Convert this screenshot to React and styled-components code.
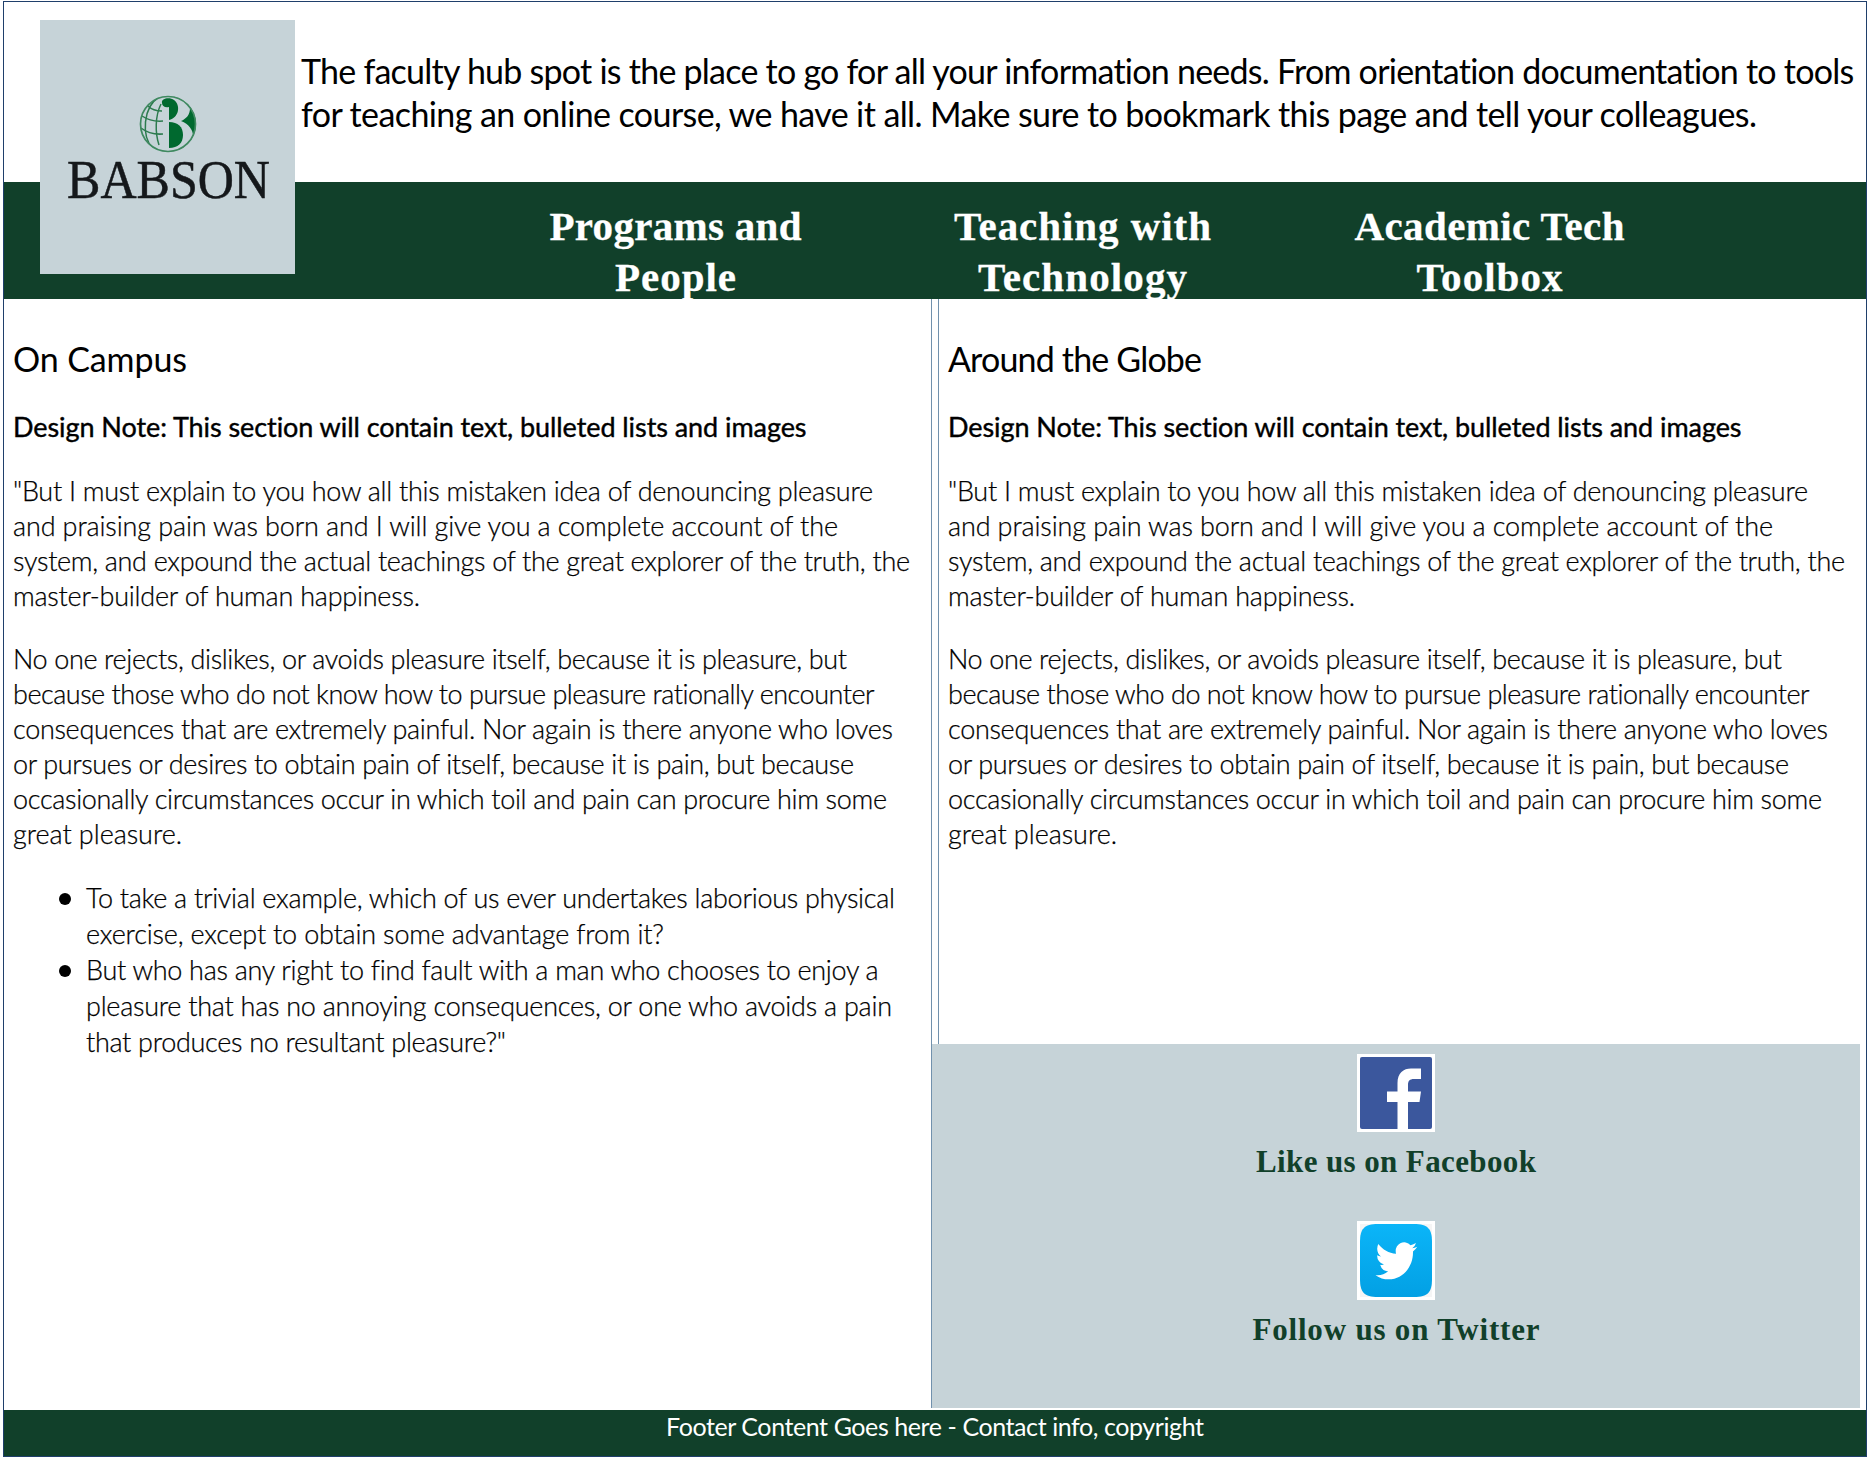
import React, { useLayoutEffect, useRef, useState } from "react";
import styled, { createGlobalStyle } from "styled-components";

const GlobalStyle = createGlobalStyle`
  * { box-sizing: border-box; }
  body { margin: 0; background: #fff; overflow: hidden; }
  h2, h3, p, ul { margin: 0; padding: 0; font-weight: inherit; }
`;

const green = "#11402a";
const mist = "#c6d3d8";
const sans = `Lato, "Open Sans", sans-serif`;
const serif = `"Liberation Serif", serif`;

const Frame = styled.div`
  display: flex;
  flex-direction: column;
  width: 1864px;
  height: 1456px;
  margin: 1px 0 0 3px;
  border: 1px solid #1f3f6b;
  color: #000;
  font-family: ${sans};
`;

const Header = styled.header`
  position: relative;
  height: 180px;
  padding: 47px 0 0 297px;
  font-size: 34px;
  line-height: 43px;
`;

const LogoBox = styled.div`
  position: absolute;
  left: 36px;
  top: 18px;
  width: 255px;
  height: 254px;
  background: ${mist};
`;

const Nav = styled.nav`
  display: flex;
  height: 117px;
  padding: 19px 0 0 468px;
  background: ${green};
`;

const NavLink = styled.a`
  width: 407px;
  display: flex;
  flex-direction: column;
  align-items: center;
  color: #fff;
  font: bold 41px/51px ${serif};
  -webkit-text-stroke: 0.3px #fff;
`;

const Columns = styled.main`
  display: flex;
  height: 1109px;
  margin-bottom: 2px;
`;

const Left = styled.section`
  width: 928px;
  padding: 38px 0 0 9px;
  border-right: 1px solid #7191ad;
`;

const Right = styled.div`
  width: 928px;
  display: flex;
  flex-direction: column;
`;

const Globe = styled.section`
  height: 745px;
  margin-left: 6px;
  padding: 38px 0 0 9px;
  border-left: 1px solid #7191ad;
`;

const Title = styled.h2`
  font-size: 34px;
  line-height: 43px;
`;

const Note = styled.h3`
  margin-top: 29px;
  font-size: 27px;
  line-height: 35px;
  -webkit-text-stroke: 0.4px #000;
`;

const Paragraph = styled.p`
  margin-top: ${(p) => p.$gap}px;
  font-size: 27px;
  font-weight: 300;
  line-height: 35px;
  -webkit-text-stroke: 0.25px #000;
`;

const List = styled.ul`
  margin-top: 29px;
  padding-left: 46px;
  list-style: none;
  font-size: 27px;
  font-weight: 300;
  line-height: 36px;
  -webkit-text-stroke: 0.25px #000;
`;

const Item = styled.li`
  display: flex;
  gap: 15px;
  &::before {
    content: "";
    flex: none;
    width: 12px;
    height: 12px;
    margin-top: 13px;
    border-radius: 50%;
    background: #000;
  }
`;

const Social = styled.aside`
  flex: 1;
  display: flex;
  flex-direction: column;
  align-items: center;
  padding-top: 10px;
  background: ${mist};
`;

const SocialLink = styled.a`
  display: flex;
  flex-direction: column;
  align-items: center;
  gap: 12px;
  margin-bottom: 41px;
  color: ${green};
  font: bold 31px/36px ${serif};
  svg { display: block; }
`;

const Footer = styled.footer`
  flex: 1;
  display: flex;
  justify-content: center;
  padding-top: 1px;
  background: ${green};
  color: #fff;
  font-size: 25px;
  line-height: 30px;
`;

const LineBox = styled.span`
  display: block;
  width: ${(p) => p.$width}px;
  white-space: nowrap;
`;

/* One line of copy, tracked so that it fills its measure. */
function Line({ width, children }) {
  const ref = useRef(null);
  const [tracking, setTracking] = useState(0);
  useLayoutEffect(() => {
    const natural = ref.current.getBoundingClientRect().width;
    setTracking((width - natural) / (children.length - 1));
  }, [width, children]);
  return (
    <LineBox $width={width}>
      <span ref={ref} style={{ letterSpacing: `${tracking}px` }}>{children}</span>
    </LineBox>
  );
}

const lines = (rows) => rows.map(([text, width]) => <Line key={text} width={width}>{text}</Line>);

const intro = [
  ["The faculty hub spot is the place to go for all your information needs. From orientation documentation to tools", 1555],
  ["for teaching an online course, we have it all. Make sure to bookmark this page and tell your colleagues.", 1456],
];

const first = [
  ["\"But I must explain to you how all this mistaken idea of denouncing pleasure", 860],
  ["and praising pain was born and I will give you a complete account of the", 825],
  ["system, and expound the actual teachings of the great explorer of the truth, the", 897],
  ["master-builder of human happiness.", 407],
];

const second = [
  ["No one rejects, dislikes, or avoids pleasure itself, because it is pleasure, but", 834],
  ["because those who do not know how to pursue pleasure rationally encounter", 862],
  ["consequences that are extremely painful. Nor again is there anyone who loves", 880],
  ["or pursues or desires to obtain pain of itself, because it is pain, but because", 841],
  ["occasionally circumstances occur in which toil and pain can procure him some", 874],
  ["great pleasure.", 169],
];

const items = [
  [
    ["To take a trivial example, which of us ever undertakes laborious physical", 809],
    ["exercise, except to obtain some advantage from it?", 578],
  ],
  [
    ["But who has any right to find fault with a man who chooses to enjoy a", 792],
    ["pleasure that has no annoying consequences, or one who avoids a pain", 806],
    ["that produces no resultant pleasure?\"", 420],
  ],
];

const links = [
  [["Programs and", 252], ["People", 121]],
  [["Teaching with", 257], ["Technology", 209]],
  [["Academic Tech", 270], ["Toolbox", 146]],
];

function Article({ title, width }) {
  return (
    <>
      <Title><Line width={width}>{title}</Line></Title>
      <Note><Line width={794}>Design Note: This section will contain text, bulleted lists and images</Line></Note>
      <Paragraph $gap={29}>{lines(first)}</Paragraph>
      <Paragraph $gap={28}>{lines(second)}</Paragraph>
    </>
  );
}

function Logo() {
  return (
    <svg width="255" height="254" viewBox="0 0 255 254">
      <defs>
        <clipPath id="globe"><circle cx="128" cy="104" r="28" /></clipPath>
      </defs>
      <g clipPath="url(#globe)">
        <path d="M134 75H158V133H134Z" fill="#00692f" />
        <path d="M127 74C143 73 150 80 150 88C150 95 146 99 141 101C149 104 153 110 153 116C153 126 144 131 127 133Z" fill={mist} />
        <path d="M129 102C138 102 143 107 143 115C143 123 138 128 129 128Z" fill="#00692f" />
        <path d="M122 83C121 78 130 77 134 80C141 85 139 98 129 100V87C125 88 122 86 122 83Z" fill="#00692f" />
        <g fill="none" stroke="#2c7b4e" strokeWidth="1.5">
          <path d="M119 77C103 87 101 116 113 129" />
          <path d="M121 84C115 96 115 113 119 125" />
          <path d="M108 86Q113 91 122 91" />
          <path d="M102 96Q111 102 123 101" />
          <path d="M101 108Q110 115 123 114" />
        </g>
      </g>
      <circle cx="128" cy="104" r="27.500" fill="none" stroke="#3f8960" strokeWidth="1.7" />
      <text x="27" y="178" textLength="203" lengthAdjust="spacingAndGlyphs" fontFamily="Liberation Serif, serif" fontSize="55" fill="#15181b" stroke="#15181b" strokeWidth="0.5">BABSON</text>
    </svg>
  );
}

function FacebookIcon() {
  return (
    <svg width="78" height="78" viewBox="0 0 78 78">
      <path d="M0 0H78V78H0Z" fill="#fff" />
      <rect x="3" y="3" width="72" height="72" rx="2" fill="#3b579d" />
      <path d="M40.500 75V48H30V37.500H40.500V29C40.500 19 46.500 14.500 54 14.500H64V25H57C52.500 25 51 27 51 31V37.500H64L62.500 48H51V75Z" fill="#fff" />
    </svg>
  );
}

function TwitterIcon() {
  return (
    <svg width="78" height="79" viewBox="0 0 78 79">
      <defs>
        <linearGradient id="sky" x1="0" y1="0" x2="0" y2="1">
          <stop offset="0" stopColor="#0bb5f8" />
          <stop offset="1" stopColor="#02a0e4" />
        </linearGradient>
      </defs>
      <path d="M0 0H78V79H0Z" fill="#fff" />
      <path d="M3 3H75V76H3Z" fill="#f5f5f5" />
      <path d="M21 3H57C71 3 75 8 75 21V58C75 71 71 76 57 76H21C7 76 3 71 3 58V21C3 8 7 3 21 3Z" fill="url(#sky)" />
      <g transform="translate(18.500 17) scale(1.740 1.900)">
        <path d="M23.950 4.570a10 10 0 0 1-2.820.770 4.960 4.960 0 0 0 2.160-2.720c-.950.550-2 .960-3.130 1.180a4.920 4.920 0 0 0-8.380 4.480C7.690 8.090 4.070 6.130 1.640 3.160a4.820 4.820 0 0 0-.670 2.480c0 1.710.870 3.210 2.190 4.100a4.900 4.900 0 0 1-2.230-.620v.060a4.920 4.920 0 0 0 3.950 4.830 5 5 0 0 1-2.210.080 4.940 4.940 0 0 0 4.600 3.420A9.870 9.870 0 0 1 0 19.540a14 14 0 0 0 7.550 2.210c9.050 0 14-7.500 14-13.980 0-.210 0-.420-.020-.630a9.940 9.940 0 0 0 2.460-2.550z" fill="#fff" />
      </g>
    </svg>
  );
}

export default function App() {
  return (
    <>
      <GlobalStyle />
      <Frame>
        <Header>
          {lines(intro)}
          <LogoBox><Logo /></LogoBox>
        </Header>
        <Nav>
          {links.map((rows) => <NavLink key={rows[0][0]}>{lines(rows)}</NavLink>)}
        </Nav>
        <Columns>
          <Left>
            <Article title="On Campus" width={174} />
            <List>
              {items.map((rows) => <Item key={rows[0][0]}><div>{lines(rows)}</div></Item>)}
            </List>
          </Left>
          <Right>
            <Globe><Article title="Around the Globe" width={254} /></Globe>
            <Social>
              <SocialLink><FacebookIcon /><Line width={280}>Like us on Facebook</Line></SocialLink>
              <SocialLink><TwitterIcon /><Line width={287}>Follow us on Twitter</Line></SocialLink>
            </Social>
          </Right>
        </Columns>
        <Footer><Line width={538}>Footer Content Goes here - Contact info, copyright</Line></Footer>
      </Frame>
    </>
  );
}
